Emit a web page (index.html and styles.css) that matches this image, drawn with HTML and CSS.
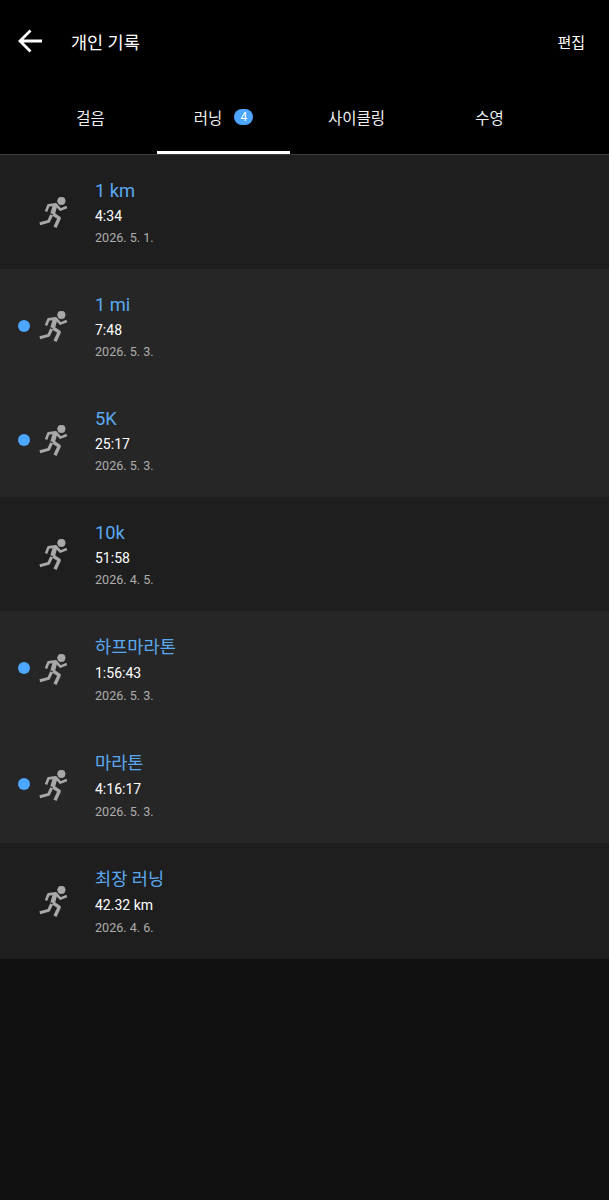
FILE: index.html
```html
<!DOCTYPE html>
<html lang="ko">
<head>
    <meta charset="UTF-8">
    <meta name="viewport" content="width=device-width, initial-scale=1.0">
    <title>개인 기록</title>
    <link rel="stylesheet" href="styles.css">
</head>
<body>
    <svg class="defs" width="0" height="0">
        <symbol id="runner" viewBox="0 0 29 31">
            <circle class="head" cx="22.4" cy="3.9" r="3.7"/>
            <polyline class="limb" points="7,14.4 9.4,8.4 16.8,7.4 21.4,12.6 27.8,10"/>
            <polyline class="torso" points="16,8.6 13.6,17"/>
            <polyline class="leg" points="14,17 20.2,21.2 16,30.2"/>
            <polyline class="back-leg" points="12.6,18 9.6,24.4 0.8,26.8"/>
        </symbol>
    </svg>

    <header class="topbar">
        <svg class="back" width="28" height="26" viewBox="0 0 28 26">
            <path d="M26 13 H5 M14.5 2.5 L4 13 L14.5 23.5" fill="none" stroke="#fff" stroke-width="2.8"/>
        </svg>
        <h1>개인 기록</h1>
        <span class="edit">편집</span>
    </header>

    <nav class="tabs">
        <div class="tab">걸음</div>
        <div class="tab active">러닝 <span class="badge">4</span></div>
        <div class="tab">사이클링</div>
        <div class="tab">수영</div>
    </nav>

    <main class="records">
        <div class="record">
            <svg class="run"><use href="#runner"/></svg>
            <div class="info"><div class="name">1 km</div><div class="value">4:34</div><div class="date">2026. 5. 1.</div></div>
        </div>
        <div class="record new">
            <i class="dot"></i>
            <svg class="run"><use href="#runner"/></svg>
            <div class="info"><div class="name">1 mi</div><div class="value">7:48</div><div class="date">2026. 5. 3.</div></div>
        </div>
        <div class="record new">
            <i class="dot"></i>
            <svg class="run"><use href="#runner"/></svg>
            <div class="info"><div class="name">5K</div><div class="value">25:17</div><div class="date">2026. 5. 3.</div></div>
        </div>
        <div class="record">
            <svg class="run"><use href="#runner"/></svg>
            <div class="info"><div class="name">10k</div><div class="value">51:58</div><div class="date">2026. 4. 5.</div></div>
        </div>
        <div class="record new tall">
            <i class="dot"></i>
            <svg class="run"><use href="#runner"/></svg>
            <div class="info"><div class="name">하프마라톤</div><div class="value">1:56:43</div><div class="date">2026. 5. 3.</div></div>
        </div>
        <div class="record new tall">
            <i class="dot"></i>
            <svg class="run"><use href="#runner"/></svg>
            <div class="info"><div class="name">마라톤</div><div class="value">4:16:17</div><div class="date">2026. 5. 3.</div></div>
        </div>
        <div class="record tall">
            <svg class="run"><use href="#runner"/></svg>
            <div class="info"><div class="name">최장 러닝</div><div class="value">42.32 km</div><div class="date">2026. 4. 6.</div></div>
        </div>
    </main>
</body>
</html>
```

FILE: styles.css
```css
html, body {
    margin: 0;
    background-color: #111111;
}
body {
    font-family: Roboto, "Noto Sans CJK KR", sans-serif;
    color: #fff;
}
.defs {
    display: block;
}
.topbar {
    height: 82px;
    background-color: #000;
    display: flex;
    align-items: center;
    padding: 0 24px 0 16px;
}
.back {
    margin-right: 27px;
}
.topbar h1 {
    flex: 1;
    margin: 0;
    font-size: 17.5px;
    font-weight: 400;
}
.edit {
    font-size: 15px;
    font-weight: 400;
}
.tabs {
    height: 72px;
    background-color: #000;
    border-bottom: 1px solid #3c3c3c;
    display: flex;
    padding: 0 24px;
}
.tab {
    width: 133px;
    height: 72px;
    display: flex;
    align-items: center;
    justify-content: center;
    gap: 12px;
    padding-bottom: 2px;
    box-sizing: border-box;
    font-size: 15.5px;
    color: #f0f0f0;
}
.tab.active {
    border-bottom: 3px solid #fff;
    padding-bottom: 0;
}
.badge {
    width: 19px;
    height: 16px;
    border-radius: 8px;
    background-color: #4da6ff;
    color: #fff;
    font-size: 12px;
    line-height: 16px;
    text-align: center;
}
.record {
    height: 114px;
    position: relative;
    display: flex;
    background-color: #1e1e1e;
    padding-left: 39px;
    box-sizing: border-box;
}
.record.tall {
    height: 116px;
}
.record.new {
    background-color: #262626;
}
.dot {
    position: absolute;
    left: 18px;
    top: 51px;
    width: 12px;
    height: 12px;
    border-radius: 50%;
    background-color: #4da6ff;
}
.run {
    width: 29px;
    height: 31px;
    margin-top: 42px;
    fill: #a8a8a8;
    stroke: #a8a8a8;
}
.record.tall .run {
    margin-top: 43px;
}
.run .head {
    stroke: none;
}
.limb, .torso, .leg, .back-leg {
    fill: none;
    stroke-linejoin: round;
}
.limb {
    stroke-width: 2.6;
}
.torso {
    stroke-width: 4.6;
}
.leg {
    stroke-width: 3.4;
}
.back-leg {
    stroke-width: 3;
}
.info {
    margin-left: 27px;
    padding-top: 24px;
}
.record.tall .info {
    padding-top: 23px;
}
.name {
    height: 23px;
    font-size: 18.3px;
    line-height: 23px;
    color: #5aa9f0;
}
.record.tall .name {
    height: 26px;
    font-size: 17.6px;
    line-height: 26px;
}
.value {
    margin-top: 3px;
    font-size: 14px;
    line-height: 22px;
}
.record.tall .value {
    margin-top: 2px;
    line-height: 23px;
}
.date {
    font-size: 12.6px;
    line-height: 22px;
    color: #adadad;
}
```
